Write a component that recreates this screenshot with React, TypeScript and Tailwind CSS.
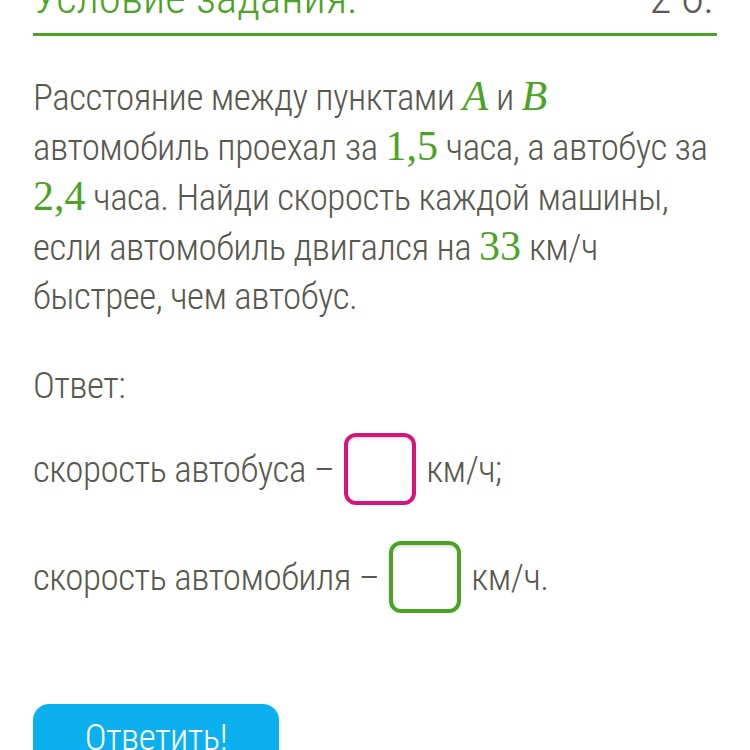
const num = "font-['Liberation_Serif',serif] text-[#4ba325] text-[42px] font-normal tracking-normal";

function AnswerBox({ color }: { color: string }) {
  return (
    <span
      className={`inline-block w-[72px] h-[72px] rounded-[12px] border-[4px] bg-white shadow-[inset_0_2px_3px_rgba(0,0,0,0.12)] ${color}`}
    />
  );
}

export default function App() {
  return (
    <div className="w-[750px] h-[750px] overflow-hidden bg-white text-[#58584f] font-['Roboto_Condensed','Roboto',sans-serif] font-light [font-stretch:condensed] tracking-[-0.5px]">
      <div className="px-[33px] -mt-[27px]">
        <div className="flex justify-between items-end border-b-[3px] border-[#4ba325] pb-[10px] pr-[3px] text-[45px] leading-[50px] tracking-normal">
          <span className="text-[#4ba325]">Условие задания:</span>
          <span>2 б.</span>
        </div>

        <p className="mt-[36px] text-[37px] leading-[49px]">
          Расстояние между пунктами <i className={num}>A</i> и <i className={num + " font-bold"}>B</i>
          <br />
          автомобиль проехал за <span className={num}>1,5</span> часа, а автобус за
          <br />
          <span className={num}>2,4</span> часа. Найди скорость каждой машины,
          <br />
          если автомобиль двигался на <span className={num}>33</span> км/ч
          <br />
          быстрее, чем автобус.
        </p>

        <div className="mt-[40px] text-[37px] leading-[49px]">Ответ:</div>

        <div className="mt-[23px] flex items-center gap-[10px] text-[37px] leading-[49px]">
          <span>скорость автобуса –</span>
          <AnswerBox color="border-[#d4167c]" />
          <span>км/ч;</span>
        </div>

        <div className="mt-[36px] flex items-center gap-[10px] text-[37px] leading-[49px]">
          <span>скорость автомобиля –</span>
          <AnswerBox color="border-[#4ba325]" />
          <span>км/ч.</span>
        </div>

        <button className="mt-[91px] w-[246px] h-[80px] rounded-[16px] bg-[#0db0ee] text-white text-[37px] font-light pt-[6px] flex justify-center items-start">
          Ответить!
        </button>
      </div>
    </div>
  );
}
